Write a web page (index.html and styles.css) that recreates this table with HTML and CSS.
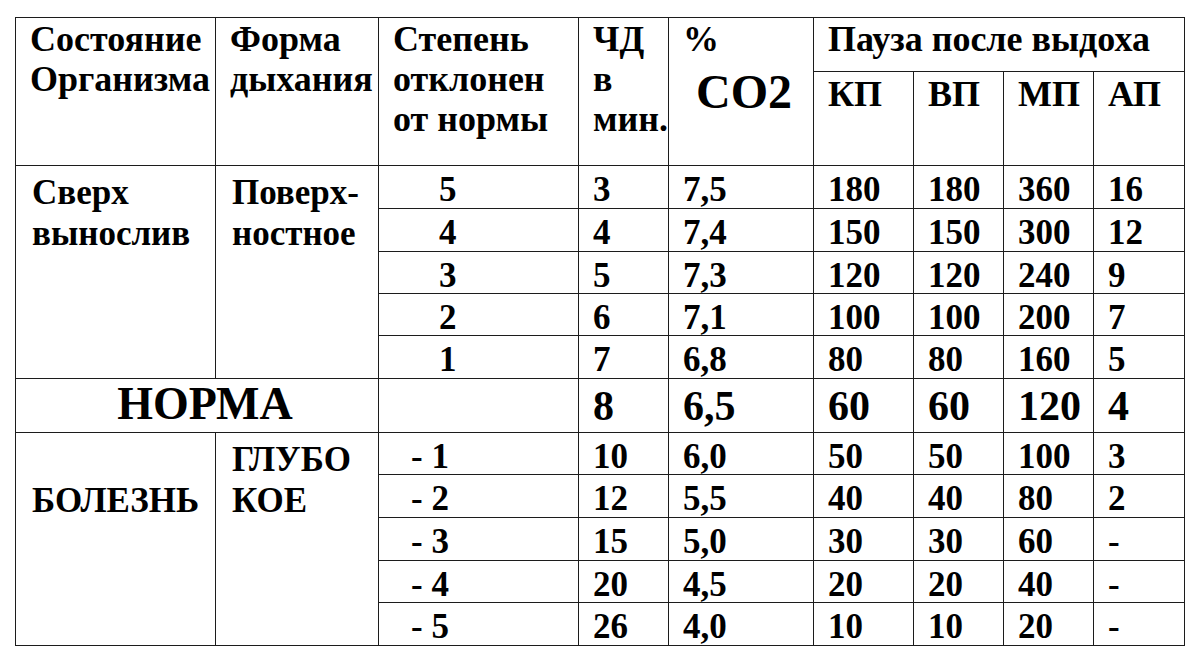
FILE: index.html
```html
<!DOCTYPE html>
<html lang="ru">
<head>
<meta charset="utf-8">
<title>Таблица</title>
<link rel="stylesheet" href="styles.css">
</head>
<body>
<table class="grid">
  <colgroup>
    <col class="c1"><col class="c2"><col class="c3"><col class="c4"><col class="c5">
    <col class="c6"><col class="c7"><col class="c8"><col class="c9">
  </colgroup>
  <tr class="h1">
    <td rowspan="2" class="head">Состояние<br>Организма</td>
    <td rowspan="2" class="head">Форма<br>дыхания</td>
    <td rowspan="2" class="head">Степень<br>отклонен<br>от нормы</td>
    <td rowspan="2" class="head">ЧД<br>в<br>мин.</td>
    <td rowspan="2" class="head">%<br><span class="co2">CO2</span></td>
    <td colspan="4" class="head">Пауза после выдоха</td>
  </tr>
  <tr class="h2">
    <td class="head sub">КП</td>
    <td class="head sub">ВП</td>
    <td class="head sub">МП</td>
    <td class="head sub">АП</td>
  </tr>
  <tr class="r43">
    <td rowspan="5" class="group">Сверх<br>вынослив</td>
    <td rowspan="5" class="group">Поверх-<br>ностное</td>
    <td class="pos">5</td><td>3</td><td>7,5</td><td>180</td><td>180</td><td>360</td><td>16</td>
  </tr>
  <tr class="r43"><td class="pos">4</td><td>4</td><td>7,4</td><td>150</td><td>150</td><td>300</td><td>12</td></tr>
  <tr class="r42"><td class="pos">3</td><td>5</td><td>7,3</td><td>120</td><td>120</td><td>240</td><td>9</td></tr>
  <tr class="r42"><td class="pos">2</td><td>6</td><td>7,1</td><td>100</td><td>100</td><td>200</td><td>7</td></tr>
  <tr class="r43"><td class="pos">1</td><td>7</td><td>6,8</td><td>80</td><td>80</td><td>160</td><td>5</td></tr>
  <tr class="norm">
    <td colspan="2" class="norm-label">НОРМА</td>
    <td></td><td>8</td><td>6,5</td><td>60</td><td>60</td><td>120</td><td>4</td>
  </tr>
  <tr class="r42">
    <td rowspan="5" class="group"><br>БОЛЕЗНЬ</td>
    <td rowspan="5" class="group">ГЛУБО<br>КОЕ</td>
    <td class="neg">- 1</td><td>10</td><td>6,0</td><td>50</td><td>50</td><td>100</td><td>3</td>
  </tr>
  <tr class="r43"><td class="neg">- 2</td><td>12</td><td>5,5</td><td>40</td><td>40</td><td>80</td><td>2</td></tr>
  <tr class="r43"><td class="neg">- 3</td><td>15</td><td>5,0</td><td>30</td><td>30</td><td>60</td><td>-</td></tr>
  <tr class="r42"><td class="neg">- 4</td><td>20</td><td>4,5</td><td>20</td><td>20</td><td>40</td><td>-</td></tr>
  <tr class="r43"><td class="neg">- 5</td><td>26</td><td>4,0</td><td>10</td><td>10</td><td>20</td><td>-</td></tr>
</table>
</body>
</html>
```
FILE: styles.css
```css
html, body {
  margin: 0;
  padding: 0;
  background: #ffffff;
}
body {
  font-family: "Liberation Serif", "Times New Roman", serif;
  font-weight: bold;
  color: #000000;
}
.grid {
  margin: 17px 0 0 15px;
  border-collapse: collapse;
  table-layout: fixed;
  width: 1170px;
  font-size: 35px;
}
.c1 { width: 200px; }
.c2 { width: 163px; }
.c3 { width: 200px; }
.c4 { width: 90px; }
.c5 { width: 145px; }
.c6 { width: 100px; }
.c7 { width: 90px; }
.c8 { width: 90px; }
.c9 { width: 91px; }

.grid td {
  border: 1px solid #1c1c1c;
  padding: 7px 0 0 14px;
  vertical-align: top;
  line-height: 33px;
  white-space: nowrap;
}
.h1 { height: 54px; }
.h2 { height: 94px; }
.r43 { height: 43px; }
.r42 { height: 42px; }
.norm { height: 54px; }

.grid td.head {
  padding-top: 1px;
  line-height: 40px;
  font-size: 36px;
}
.grid td.sub {
  padding-top: 2px;
}
.co2 {
  display: inline-block;
  font-size: 48px;
  line-height: 50px;
  padding-left: 13px;
  margin-top: 8px;
}
.grid td.group {
  line-height: 41px;
  padding-left: 16px;
  padding-top: 6px;
}
.grid td.pos { padding-left: 60px; }
.grid td.neg { padding-left: 32px; }

.norm td {
  font-size: 42px;
  line-height: 44px;
  padding-top: 5px;
}
.grid td.norm-label {
  font-size: 46px;
  text-align: center;
  padding-left: 16px;
  padding-top: 3px;
}
```
